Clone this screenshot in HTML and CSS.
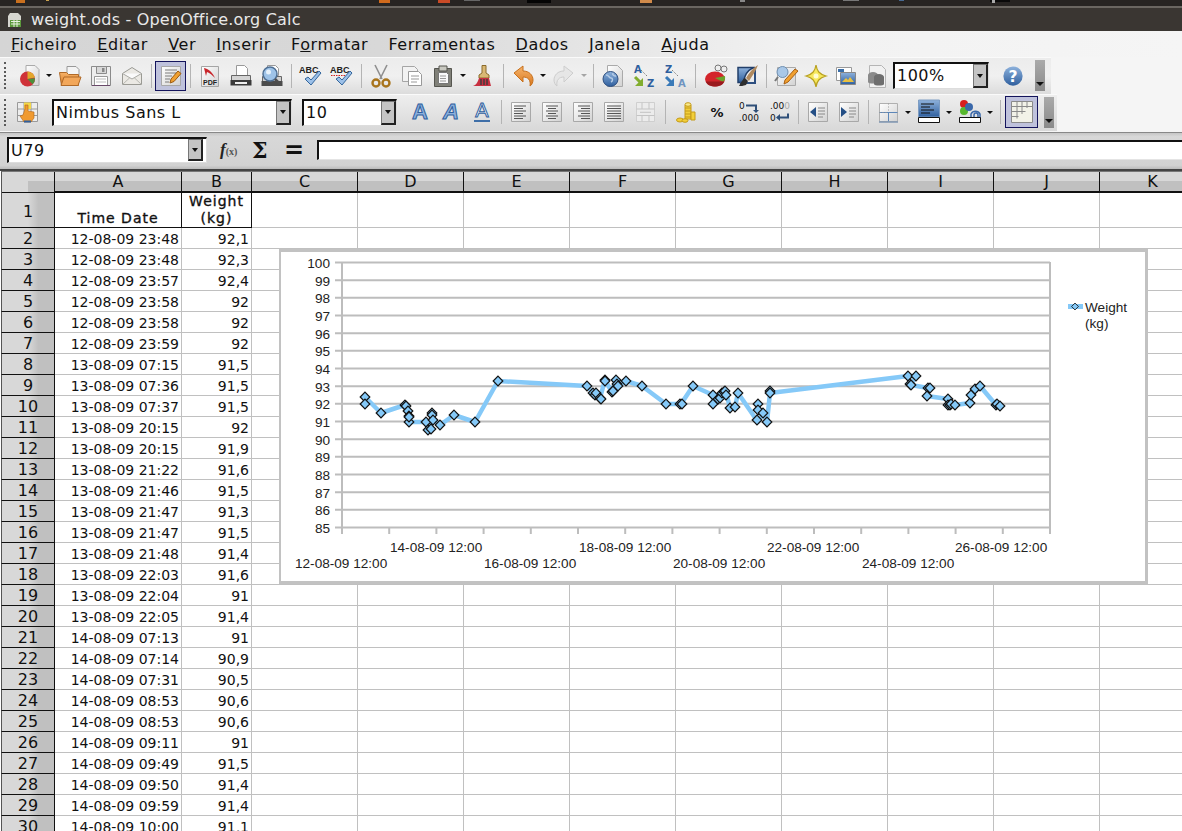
FILE: index.html
```html
<!DOCTYPE html>
<html lang="pt">
<head>
<meta charset="utf-8">
<title>weight.ods - OpenOffice.org Calc</title>
<link rel="stylesheet" href="styles.css">
</head>
<body>
<svg class="defs" width="0" height="0" aria-hidden="true">
  <defs>
    <linearGradient id="gsheet" x1="0" y1="0" x2="1" y2="1"><stop offset="0" stop-color="#fff"/><stop offset="1" stop-color="#d2d2d2"/></linearGradient>
    <linearGradient id="gorange" x1="0" y1="0" x2="0" y2="1"><stop offset="0" stop-color="#f6b36a"/><stop offset="1" stop-color="#d9781e"/></linearGradient>
    <linearGradient id="gblue" x1="0" y1="0" x2="0" y2="1"><stop offset="0" stop-color="#8eb2dc"/><stop offset="1" stop-color="#2f5f9e"/></linearGradient>
    <symbol id="page" viewBox="0 0 24 24"><path d="M2.500 2.500h19v19h-19z" fill="url(#gsheet)" stroke="#a8a8a8"/></symbol>
    <symbol id="aL" viewBox="0 0 24 24"><use href="#page"/><path d="M5 6h12M5 8.500h9M5 11h12M5 13.500h9M5 16h12M5 18.500h9" stroke="#555" fill="none"/></symbol>
    <symbol id="aC" viewBox="0 0 24 24"><use href="#page"/><path d="M6 6h12M8 8.500h8M6 11h12M8 13.500h8M6 16h12M8 18.500h8" stroke="#555" fill="none"/></symbol>
    <symbol id="aR" viewBox="0 0 24 24"><use href="#page"/><path d="M7 6h12M10 8.500h9M7 11h12M10 13.500h9M7 16h12M10 18.500h9" stroke="#555" fill="none"/></symbol>
    <symbol id="aJ" viewBox="0 0 24 24"><use href="#page"/><path d="M5 6h14M5 8.500h14M5 11h14M5 13.500h14M5 16h14M5 18.500h14" stroke="#555" fill="none"/></symbol>
    <symbol id="check" viewBox="0 0 24 24"><path d="M6 15l3-2 3 3 8-9 2 2-10 12z" fill="#9cc0e8" stroke="#33669c"/></symbol>
    <symbol id="dia" viewBox="-7 -7 14 14"><path d="M0-4.800 4.800 0 0 4.800-4.800 0z" fill="#85c9f8" stroke="#111" stroke-width="1.200"/></symbol>
  </defs>
</svg>

<svg class="strip" viewBox="0 0 1182 8" width="1182" height="8" aria-hidden="true">
  <rect width="1182" height="6" fill="#272422"/>
  <rect y="6" width="1182" height="2" fill="#6a6661"/>
  <rect x="16" width="9" height="3" fill="#c9701e"/><rect x="46" width="3" height="1" fill="#c9a24e"/>
  <rect x="379" width="11" height="3" fill="#d06a1c"/><rect x="438" width="12" height="3" fill="#c94a26"/><rect x="464" width="16" height="1" fill="#666"/>
  <rect x="527" width="24" height="3" fill="#050505"/><rect x="640" width="12" height="3" fill="#d08a4a"/><rect x="740" width="5" height="2" fill="#888"/>
  <rect x="843" width="16" height="1" fill="#777"/><rect x="899" width="5" height="1" fill="#47688f"/><rect x="990" width="20" height="2" fill="#0a0a0a"/><rect x="992" width="3" height="3" fill="#aaa"/>
</svg>

<header class="titlebar">
  <svg class="title-icon" viewBox="0 0 16 16" width="16" height="16" aria-hidden="true"><path d="M3 1h8l3 3v11H1V4z" fill="#d6d6cf"/><path d="M3 8h11v7H3z" fill="#5c9a3c"/><path d="M4 9.500h9M4 12h9M7 8v7M10 8v7" stroke="#e8f2e0" fill="none"/></svg>
  <span class="title-text">weight.ods - OpenOffice.org Calc</span>
</header>

<nav class="menubar">
  <span class="menu"><u>F</u>icheiro</span>
  <span class="menu"><u>E</u>ditar</span>
  <span class="menu"><u>V</u>er</span>
  <span class="menu"><u>I</u>nserir</span>
  <span class="menu">F<u>o</u>rmatar</span>
  <span class="menu">Ferra<u>m</u>entas</span>
  <span class="menu"><u>D</u>ados</span>
  <span class="menu"><u>J</u>anela</span>
  <span class="menu"><u>A</u>juda</span>
</nav>

<div class="toolbar tb-one">
  <span class="grip"></span>
  <span class="i"><svg viewBox="0 0 24 24"><path d="M9 1.500h9l4 4v16H9z" fill="url(#gsheet)" stroke="#aaa"/><circle cx="10.500" cy="15" r="7.500" fill="#cf3238"/><path d="M10.500 15V7.500a7.500 7.500 0 0 1 7.400 6z" fill="#e2a72c"/><path d="M10.500 15l7.500-.800a7.500 7.500 0 0 1-2.500 6z" fill="#4b8f3b"/></svg></span>
  <span class="arr"></span>
  <span class="i"><svg viewBox="0 0 24 24"><path d="M9 2.500h9l3 3V14H9z" fill="#f4f4f4" stroke="#999"/><path d="M1.500 8.500h7l2 2h10v11H3.500z" fill="url(#gorange)" stroke="#b06a28"/><path d="M3 21.500 6 13h17l-3 8.500z" fill="#f2a75a" stroke="#b06a28"/></svg></span>
  <span class="i"><svg viewBox="0 0 24 24"><path d="M2.500 2.500h19v19h-19z" fill="#ededed" stroke="#8b8b8b"/><path d="M7.500 2.500h10v7h-10z" fill="#d8d8d8" stroke="#8b8b8b"/><path d="M13 4h2.500v4H13z" fill="#888"/><path d="M5.500 12.500h13v9h-13z" fill="#fff" stroke="#999"/><path d="M7 15h10M7 18h10" stroke="#bbb"/><path d="M3 21h18v1H3z" fill="#6a4a6a"/></svg></span>
  <span class="i"><svg viewBox="0 0 24 24"><path d="M2.500 9.500 12 3.500l9.500 6v11h-19z" fill="#ebe9e4" stroke="#9a9a94"/><path d="M2.500 9.500 12 15l9.500-5.500" fill="#fafafa" stroke="#a9a9a3"/><path d="M2.500 20.500 10 13.500M21.500 20.500 14 13.500" stroke="#b8b8b2" fill="none"/></svg></span>
  <span class="sep"></span>
  <span class="i active"><svg viewBox="0 0 24 24"><use href="#page"/><path d="M6 6h12M6 9h11M6 12h7M6 15h5M6 18h4" stroke="#7c7c7c"/><path d="M11 19l1-4 7-8 3 2.500-7 8z" fill="#f0a030" stroke="#9a5a10"/></svg></span>
  <span class="sep"></span>
  <span class="i"><svg viewBox="0 0 24 24"><path d="M3.500 2.500h17v20h-17z" fill="url(#gsheet)" stroke="#a5a5a5"/><path d="M6 4c5 1 9 5 11 10-3-3-5-5-8-6l-1 4z" fill="#c8242a"/><text x="12" y="21" class="svg-pdf">PDF</text></svg></span>
  <span class="i"><svg viewBox="0 0 24 24"><path d="M7.500 1.500h8l3 3v8h-11z" fill="#fff" stroke="#999"/><path d="M2.500 11.500h19v8h-19z" fill="#d4d4d4" stroke="#666"/><path d="M1.500 16h21v5.500h-21z" fill="#3a3a3a"/><path d="M6 18h12v2H6z" fill="#eee"/></svg></span>
  <span class="i"><svg viewBox="0 0 24 24"><path d="M2.500 12.500h19v7h-19z" fill="#cfcfcf" stroke="#666"/><path d="M1.500 17h21v5h-21z" fill="#4c4c4c"/><path d="M7.500 1.500h8l3 3v7h-11z" fill="#fff" stroke="#999"/><circle cx="10" cy="10" r="7" fill="#9ec3e8" stroke="#4e6f94" stroke-width="1.500"/><circle cx="8.500" cy="8" r="2.500" fill="#e6f1fb"/><path d="M15 15l5 5" stroke="#4e4e4e" stroke-width="2.500"/></svg></span>
  <span class="sep"></span>
  <span class="i"><svg viewBox="0 0 24 24"><text x="0" y="9" class="svg-abc">ABC</text><use href="#check"/></svg></span>
  <span class="i"><svg viewBox="0 0 24 24"><text x="0" y="9" class="svg-abc">ABC</text><path d="M1 11.500h15" stroke="#d02020" stroke-dasharray="1.500 1" fill="none"/><use href="#check"/></svg></span>
  <span class="sep"></span>
  <span class="i"><svg viewBox="0 0 24 24"><path d="M6 1l7 14M18 1l-7 14" stroke="#8f8f8f" stroke-width="1.600" fill="none"/><circle cx="7" cy="19" r="3.500" fill="none" stroke="#a8741c" stroke-width="2.400"/><circle cx="17" cy="19" r="3.500" fill="none" stroke="#a8741c" stroke-width="2.400"/></svg></span>
  <span class="i"><svg viewBox="0 0 24 24"><path d="M2.500 2.500h12l3 3v12h-15z" fill="#f2f2f2" stroke="#a5a5a5"/><path d="M8.500 7.500h10l3 3v11h-13z" fill="#fff" stroke="#999"/><path d="M11 12h8M11 15h8M11 18h6" stroke="#999"/></svg></span>
  <span class="i"><svg viewBox="0 0 24 24"><path d="M3.500 4.500h17v18h-17z" fill="#808078" stroke="#55554f"/><path d="M8 2h8v5H8z" fill="#c8c8c0" stroke="#55554f"/><path d="M7.500 8.500h8l2 2v9h-10z" fill="#fafafa" stroke="#777"/><path d="M9 12h6M9 14.500h6M9 17h6" stroke="#999"/></svg></span>
  <span class="arr"></span>
  <span class="i"><svg viewBox="0 0 24 24"><path d="M10 1.500h4V9l3 2v3H7v-3l3-2z" fill="#d9b874" stroke="#8a6a2a"/><path d="M7 14h10l2 8H1c3-1 5-4 6-8z" fill="#c83040"/><path d="M9 15v6M12 15v6M15 15v6" stroke="#3c3c3c" stroke-width="1.400"/></svg></span>
  <span class="sep"></span>
  <span class="i"><svg viewBox="0 0 24 24"><path d="M3 9l9-7v5c6 0 10 4 10 9 0 2-1 5-3 6 1-6-2-9-7-9v5z" fill="url(#gorange)" stroke="#c7701c"/></svg></span>
  <span class="arr"></span>
  <span class="i"><svg viewBox="0 0 24 24"><path d="M21 9l-9-7v5c-6 0-10 4-10 9 0 2 1 5 3 6-1-6 2-9 7-9v5z" fill="#e6e6e6" stroke="#cdcdcd"/></svg></span>
  <span class="arr muted"></span>
  <span class="sep"></span>
  <span class="i"><svg viewBox="0 0 24 24"><path d="M6.500 1.500h10l5 5v16h-15z" fill="url(#gsheet)" stroke="#aaa"/><circle cx="9.500" cy="15" r="7.500" fill="url(#gblue)" stroke="#2e4f80"/><path d="M5 11c3 0 3 3 5 3s2 3 0 4M12 9c-1 2 1 3 3 3" stroke="#b4cbe6" fill="none" stroke-width="1.500"/></svg></span>
  <span class="i"><svg viewBox="0 0 24 24"><text x="2" y="9" class="svg-az">A</text><text x="15" y="23" class="svg-az">Z</text><path d="M9 6l7 7" stroke="#555" stroke-dasharray="1 1.500"/><path d="M3 13l6 6" stroke="#82ad2e" stroke-width="3"/><path d="M11 14v8H3z" fill="#82ad2e"/></svg></span>
  <span class="i"><svg viewBox="0 0 24 24"><text x="2" y="9" class="svg-az">Z</text><text x="15" y="23" class="svg-az light">A</text><path d="M9 6l7 7" stroke="#555" stroke-dasharray="1 1.500"/><path d="M3 13l6 6" stroke="#3a7ab8" stroke-width="3"/><path d="M11 14v8H3z" fill="#3a7ab8"/></svg></span>
  <span class="sep sep-wide"></span>
  <span class="i"><svg viewBox="0 0 24 24"><ellipse cx="11" cy="15" rx="10" ry="7.500" fill="#d3242a"/><path d="M11 14l10-2c.500 3-.500 5-2 6z" fill="#6aa22c"/><path d="M2 18c1 3 5 4.500 9 4.500s8-1.500 9-4.500v-.500H2z" fill="#9a1a1e"/><circle cx="14" cy="4" r="3" fill="#eee" stroke="#777"/><circle cx="20" cy="5" r="3" fill="#eee" stroke="#777"/></svg></span>
  <span class="i"><svg viewBox="0 0 24 24"><path d="M3 3.500h17c-5 1-8 4-10 9l-2 6H3z" fill="url(#gblue)" stroke="#223f6a" stroke-width="1.500"/><path d="M20 3.500V19H5" fill="none" stroke="#2e4f80" stroke-width="2"/><path d="M23 1c-5 3-9 8-12 13l3 3c3-5 7-10 9-16z" fill="#b08a60"/><path d="M4 22c2 0 4 0 7-1l2-4-3-3c-2 1-4 4-6 8z" fill="#2f2f2f"/></svg></span>
  <span class="sep"></span>
  <span class="i"><svg viewBox="0 0 24 24"><path d="M3.500 3.500h18v18h-18z" fill="url(#gsheet)" stroke="#aaa"/><circle cx="8.500" cy="8" r="5.500" fill="#a9c8e8" stroke="#6f8fb0"/><path d="M4 13l-3 4" stroke="#777" stroke-width="2"/><path d="M10 20l1-4 10-11 3 2-10 11z" fill="#f0a030" stroke="#a85f10"/></svg></span>
  <span class="i n29"><svg viewBox="0 0 24 24"><path d="M12 1c1 6 3 9 10 11-7 2-9 5-10 11-1-6-3-9-10-11 7-2 9-5 10-11z" fill="#f6e85c" stroke="#b8a020" stroke-width="1.200"/><circle cx="12" cy="12" r="2.500" fill="#fffbd0"/></svg></span>
  <span class="i"><svg viewBox="0 0 24 24"><path d="M2.500 3.500h15v13h-15z" fill="#fff" stroke="#999"/><path d="M4 5h6v3H4z" fill="#3a6ea8"/><path d="M6.500 8.500h15v12h-15z" fill="url(#gblue)" stroke="#888"/><path d="M8 18l4-4 2 2 2-3 4 5z" fill="#e8c040"/></svg></span>
  <span class="i"><svg viewBox="0 0 24 24"><path d="M4.500 1.500h12l4 4v18h-16z" fill="#f1f1f1" stroke="#b5b5b5"/><ellipse cx="8" cy="11" rx="5" ry="3" fill="#8a8a8a"/><path d="M3 11v7c0 2 10 2 10 0v-7z" fill="#8a8a8a"/><ellipse cx="14" cy="13" rx="5" ry="3" fill="#6e6e6e"/><path d="M9 13v7c0 2 10 2 10 0v-7z" fill="#6e6e6e"/></svg></span>
  <span class="combo zoom-box"><span class="combo-text">100%</span><span class="drop"></span></span>
  <span class="i help"><svg viewBox="0 0 24 24"><circle cx="12" cy="12" r="10.500" fill="url(#gblue)"/><text x="12" y="18" class="svg-help">?</text></svg></span>
  <span class="endgrip"></span>
</div>

<div class="toolbar tb-two">
  <span class="grip"></span>
  <span class="i"><svg viewBox="0 0 24 24"><path d="M2.500 2.500h20v19h-20z" fill="#ededed" stroke="#9a9a9a"/><path d="M2.500 9h20M2.500 15.500h20M9 2.500v19M16 2.500v19" stroke="#9a9a9a"/><path d="M9 2.500h7V9H9z" fill="#f4d848"/><path d="M10 9V5h3v6l6 1v6l-3 4H9l-4-6 3-1z" fill="#f09a30" stroke="#b0641a" stroke-width=".6"/><path d="M9 21.500h7" stroke="#2f5f9e" stroke-width="2"/></svg></span>
  <span class="combo font-box"><span class="combo-text">Nimbus Sans L</span><span class="drop"></span></span>
  <span class="combo size-box"><span class="combo-text">10</span><span class="drop"></span></span>
  <span class="i first-a"><svg viewBox="0 0 24 24"><text x="12" y="19" class="svg-a bold">A</text></svg></span>
  <span class="i"><svg viewBox="0 0 24 24"><text x="12" y="19" class="svg-a ital">A</text></svg></span>
  <span class="i"><svg viewBox="0 0 24 24"><text x="12" y="17" class="svg-a plain">A</text><path d="M4 21h16" stroke="#3f6fa8" stroke-width="2"/></svg></span>
  <span class="sep"></span>
  <span class="i"><svg viewBox="0 0 24 24"><use href="#aL"/></svg></span>
  <span class="i"><svg viewBox="0 0 24 24"><use href="#aC"/></svg></span>
  <span class="i"><svg viewBox="0 0 24 24"><use href="#aR"/></svg></span>
  <span class="i"><svg viewBox="0 0 24 24"><use href="#aJ"/></svg></span>
  <span class="i"><svg viewBox="0 0 24 24"><path d="M3.500 2.500h18v19h-18z" fill="#ececec" stroke="#cfcfcf"/><path d="M3.500 9h18M3.500 15.500h18M9 2.500V9M16 2.500V9M9 15.500v6M16 15.500v6M7 12.300h11" stroke="#c4c4c4" fill="none"/></svg></span>
  <span class="sep sep-wide"></span>
  <span class="i"><svg viewBox="0 0 24 24"><path d="M11 5h6v14h-6z" fill="#f2cf3a" stroke="#c49a1a"/><path d="M11 8h6M11 11h6M11 14h6M11 17h6" stroke="#c49a1a"/><ellipse cx="14" cy="4.500" rx="3" ry="1.800" fill="#fae98a" stroke="#c49a1a"/><path d="M17 12h4v8h-4z" fill="#f2cf3a" stroke="#c49a1a"/><ellipse cx="6" cy="20" rx="3.500" ry="2" fill="#f2cf3a" stroke="#c49a1a"/><ellipse cx="11" cy="20.500" rx="3" ry="1.800" fill="#f2cf3a" stroke="#c49a1a"/></svg></span>
  <span class="i"><svg viewBox="0 0 24 24"><text x="12" y="17" class="svg-pct">%</text></svg></span>
  <span class="i"><svg viewBox="0 0 24 24"><text x="3" y="9" class="svg-num">0</text><path d="M10 5.500h10v5" fill="none" stroke="#2f4f78" stroke-width="2"/><path d="M17 10h6l-3 3z" fill="#2f4f78"/><text x="3" y="21" class="svg-num">.000</text></svg></span>
  <span class="i"><svg viewBox="0 0 24 24"><text x="3" y="9" class="svg-num">.00<tspan class="svg-fade">0</tspan></text><text x="3" y="21" class="svg-num">0</text><path d="M21 13.500v4H12" fill="none" stroke="#2f4f78" stroke-width="2"/><path d="M13 14v7l-4-3.500z" fill="#2f4f78"/></svg></span>
  <span class="sep"></span>
  <span class="i"><svg viewBox="0 0 24 24"><use href="#page"/><path d="M10 7v10l-6-5z" fill="#244f86"/><path d="M12 8h7M12 11h7M12 14h7M12 17h5" stroke="#888"/></svg></span>
  <span class="i"><svg viewBox="0 0 24 24"><use href="#page"/><path d="M4 7v10l6-5z" fill="#244f86"/><path d="M12 8h7M12 11h7M12 14h7M12 17h5" stroke="#888"/></svg></span>
  <span class="sep"></span>
  <span class="i"><svg viewBox="0 0 24 24"><path d="M3.500 3.500h18v18h-18z" fill="url(#gsheet)" stroke="#b0b0b0"/><path d="M3.500 12.500h18M12.500 12v9.500" stroke="#5c86b8"/><path d="M12.500 3.500V12M3.500 12.500H12" stroke="#999" stroke-dasharray="1 2"/><path d="M3 22h19" stroke="#7f96b2" stroke-width="1.500"/></svg></span>
  <span class="arr"></span>
  <span class="i"><svg viewBox="0 0 24 24"><path d="M1.500 0h21v17h-21z" fill="url(#gblue)" stroke="#7d9cc2"/><path d="M4 4h13M4 7h9M4 10h13M4 13h9" stroke="#111"/><path d="M1.500 17.500h21v5h-21z" fill="#fff" stroke="#111"/></svg></span>
  <span class="arr"></span>
  <span class="i"><svg viewBox="0 0 24 24"><circle cx="6" cy="4" r="4" fill="#d81e1e"/><circle cx="6" cy="11" r="4" fill="#58b82e"/><circle cx="11" cy="7" r="4" fill="#3a68aa"/><path d="M13 17v-3a5 5 0 0 1 9 0v4M16 17v-2a2 2 0 0 1 4 0v2" fill="none" stroke="#3a68aa" stroke-width="1.500"/><path d="M1.500 17.500h21v5h-21z" fill="#fff" stroke="#111"/></svg></span>
  <span class="arr"></span>
  <span class="sep sep-wide"></span>
  <span class="i active tall"><svg viewBox="0 0 24 24"><path d="M1.500 1.500h21v21h-21z" fill="#f2f2e8" stroke="#8a8a8a"/><path d="M1.500 6.500h21M1.500 11.500h14M1.500 16.500h7M7 1.500v17M12 1.500V14M17 1.500V8" stroke="#8a8a8a" stroke-width="1" fill="none"/></svg></span>
  <span class="endgrip two"></span>
</div>

<div class="formulabar">
  <span class="name-box"><span class="combo-text">U79</span><span class="drop"></span></span>
  <span class="fx"><i>f</i><small>(x)</small></span>
  <span class="sigma">Σ</span>
  <span class="equals">=</span>
  <span class="input"></span>
</div>

<main class="sheet">
  <div class="row head">
    <span class="corner"></span><span class="ch a">A</span><span class="ch b">B</span>
    <span class="ch w">C</span><span class="ch w">D</span><span class="ch w">E</span><span class="ch w">F</span><span class="ch w">G</span><span class="ch w">H</span><span class="ch w">I</span><span class="ch w">J</span><span class="ch w">K</span>
  </div>
  <div class="row first"><span class="rh">1</span><span class="c a hd bottom">Time Date</span><span class="c b hd">Weight (kg)</span><span class="rest"></span></div>
  <div class="row"><span class="rh">2</span><span class="c a">12-08-09 23:48</span><span class="c b">92,1</span><span class="rest"></span></div>
  <div class="row"><span class="rh">3</span><span class="c a">12-08-09 23:48</span><span class="c b">92,3</span><span class="rest"></span></div>
  <div class="row"><span class="rh">4</span><span class="c a">12-08-09 23:57</span><span class="c b">92,4</span><span class="rest"></span></div>
  <div class="row"><span class="rh">5</span><span class="c a">12-08-09 23:58</span><span class="c b">92</span><span class="rest"></span></div>
  <div class="row"><span class="rh">6</span><span class="c a">12-08-09 23:58</span><span class="c b">92</span><span class="rest"></span></div>
  <div class="row"><span class="rh">7</span><span class="c a">12-08-09 23:59</span><span class="c b">92</span><span class="rest"></span></div>
  <div class="row"><span class="rh">8</span><span class="c a">13-08-09 07:15</span><span class="c b">91,5</span><span class="rest"></span></div>
  <div class="row"><span class="rh">9</span><span class="c a">13-08-09 07:36</span><span class="c b">91,5</span><span class="rest"></span></div>
  <div class="row"><span class="rh">10</span><span class="c a">13-08-09 07:37</span><span class="c b">91,5</span><span class="rest"></span></div>
  <div class="row"><span class="rh">11</span><span class="c a">13-08-09 20:15</span><span class="c b">92</span><span class="rest"></span></div>
  <div class="row"><span class="rh">12</span><span class="c a">13-08-09 20:15</span><span class="c b">91,9</span><span class="rest"></span></div>
  <div class="row"><span class="rh">13</span><span class="c a">13-08-09 21:22</span><span class="c b">91,6</span><span class="rest"></span></div>
  <div class="row"><span class="rh">14</span><span class="c a">13-08-09 21:46</span><span class="c b">91,5</span><span class="rest"></span></div>
  <div class="row"><span class="rh">15</span><span class="c a">13-08-09 21:47</span><span class="c b">91,3</span><span class="rest"></span></div>
  <div class="row"><span class="rh">16</span><span class="c a">13-08-09 21:47</span><span class="c b">91,5</span><span class="rest"></span></div>
  <div class="row"><span class="rh">17</span><span class="c a">13-08-09 21:48</span><span class="c b">91,4</span><span class="rest"></span></div>
  <div class="row"><span class="rh">18</span><span class="c a">13-08-09 22:03</span><span class="c b">91,6</span><span class="rest"></span></div>
  <div class="row"><span class="rh">19</span><span class="c a">13-08-09 22:04</span><span class="c b">91</span><span class="rest"></span></div>
  <div class="row"><span class="rh">20</span><span class="c a">13-08-09 22:05</span><span class="c b">91,4</span><span class="rest"></span></div>
  <div class="row"><span class="rh">21</span><span class="c a">14-08-09 07:13</span><span class="c b">91</span><span class="rest"></span></div>
  <div class="row"><span class="rh">22</span><span class="c a">14-08-09 07:14</span><span class="c b">90,9</span><span class="rest"></span></div>
  <div class="row"><span class="rh">23</span><span class="c a">14-08-09 07:31</span><span class="c b">90,5</span><span class="rest"></span></div>
  <div class="row"><span class="rh">24</span><span class="c a">14-08-09 08:53</span><span class="c b">90,6</span><span class="rest"></span></div>
  <div class="row"><span class="rh">25</span><span class="c a">14-08-09 08:53</span><span class="c b">90,6</span><span class="rest"></span></div>
  <div class="row"><span class="rh">26</span><span class="c a">14-08-09 09:11</span><span class="c b">91</span><span class="rest"></span></div>
  <div class="row"><span class="rh">27</span><span class="c a">14-08-09 09:49</span><span class="c b">91,5</span><span class="rest"></span></div>
  <div class="row"><span class="rh">28</span><span class="c a">14-08-09 09:50</span><span class="c b">91,4</span><span class="rest"></span></div>
  <div class="row"><span class="rh">29</span><span class="c a">14-08-09 09:59</span><span class="c b">91,4</span><span class="rest"></span></div>
  <div class="row"><span class="rh">30</span><span class="c a">14-08-09 10:00</span><span class="c b">91,1</span><span class="rest"></span></div>

  <svg class="chart" viewBox="279 249 869 335" width="869" height="335" role="img" aria-label="Weight chart">
    <rect x="279" y="249" width="869" height="335" fill="#c2c2c2"/>
    <rect x="281" y="252" width="864" height="329" fill="#fff"/>
    <path class="g" d="M335 262.500H1050M335 280.200H1050M335 297.800H1050M335 315.500H1050M335 333.200H1050M335 350.800H1050M335 368.500H1050M335 386.200H1050M335 403.800H1050M335 421.500H1050M335 439.200H1050M335 456.800H1050M335 474.500H1050M335 492.200H1050M335 509.800H1050M335 527.500H1050"/>
    <path class="g" d="M342 262V534M1050 262V534M389.200 528v6M436.400 528v6M483.600 528v6M530.800 528v6M578 528v6M625.200 528v6M672.400 528v6M719.600 528v6M766.800 528v6M814 528v6M861.200 528v6M908.400 528v6M955.600 528v6M1002.800 528v6"/>
    <g class="ylab">
      <text x="330" y="267.500">100</text><text x="330" y="285.500">99</text><text x="330" y="302.500">98</text><text x="330" y="320.500">97</text><text x="330" y="338.500">96</text><text x="330" y="355.500">95</text><text x="330" y="373.500">94</text><text x="330" y="391.500">93</text><text x="330" y="408.500">92</text><text x="330" y="426.500">91</text><text x="330" y="444.500">90</text><text x="330" y="461.500">89</text><text x="330" y="479.500">88</text><text x="330" y="497.500">87</text><text x="330" y="514.500">86</text><text x="330" y="532.500">85</text>
    </g>
    <g class="xlab">
      <text x="390" y="552">14-08-09 12:00</text><text x="579" y="552">18-08-09 12:00</text><text x="767" y="552">22-08-09 12:00</text><text x="955" y="552">26-08-09 12:00</text>
      <text x="295" y="568">12-08-09 12:00</text><text x="484" y="568">16-08-09 12:00</text><text x="673" y="568">20-08-09 12:00</text><text x="862" y="568">24-08-09 12:00</text>
    </g>
    <polyline class="series" points="365,404 365,397 381,413 405,405 406,406 408,411 409,416 409,422 426,422 428,430 431,429 432,413 433,420 440,425 454,415 475,422 498,381 587,386 593,393 596,395 600,398 605,380 612,392 616,380 618,386 626,381 642,386 666,404 681,404 693,386 713,395 713,404 718,399 722,393 726,392 730,408 735,407 738,393 758,422 763,413 767,422 770,393 908,376 916,376 911,385 928,388 927,396 948,399 951,404 955,405 970,403 971,395 975,389 980,386 996,405 1000,406"/>
    <g class="marks">
      <use href="#dia" x="358" y="390" width="14" height="14"/><use href="#dia" x="358" y="397" width="14" height="14"/><use href="#dia" x="374" y="406" width="14" height="14"/><use href="#dia" x="398" y="398" width="14" height="14"/><use href="#dia" x="399" y="399" width="14" height="14"/><use href="#dia" x="401" y="404" width="14" height="14"/><use href="#dia" x="402" y="409" width="14" height="14"/><use href="#dia" x="402" y="415" width="14" height="14"/><use href="#dia" x="402" y="410" width="14" height="14"/>
      <use href="#dia" x="419" y="415" width="14" height="14"/><use href="#dia" x="421" y="423" width="14" height="14"/><use href="#dia" x="424" y="422" width="14" height="14"/><use href="#dia" x="425" y="406" width="14" height="14"/><use href="#dia" x="425" y="408" width="14" height="14"/><use href="#dia" x="426" y="413" width="14" height="14"/><use href="#dia" x="433" y="418" width="14" height="14"/><use href="#dia" x="447" y="408" width="14" height="14"/><use href="#dia" x="468" y="415" width="14" height="14"/><use href="#dia" x="491" y="374" width="14" height="14"/>
      <use href="#dia" x="580" y="379" width="14" height="14"/><use href="#dia" x="586" y="386" width="14" height="14"/><use href="#dia" x="588" y="388" width="14" height="14"/><use href="#dia" x="589" y="386" width="14" height="14"/><use href="#dia" x="593" y="391" width="14" height="14"/><use href="#dia" x="594" y="392" width="14" height="14"/><use href="#dia" x="598" y="373" width="14" height="14"/><use href="#dia" x="598" y="374" width="14" height="14"/><use href="#dia" x="605" y="385" width="14" height="14"/><use href="#dia" x="606" y="384" width="14" height="14"/><use href="#dia" x="609" y="373" width="14" height="14"/><use href="#dia" x="610" y="377" width="14" height="14"/><use href="#dia" x="611" y="379" width="14" height="14"/><use href="#dia" x="619" y="374" width="14" height="14"/><use href="#dia" x="635" y="379" width="14" height="14"/><use href="#dia" x="659" y="397" width="14" height="14"/>
      <use href="#dia" x="673" y="397" width="14" height="14"/><use href="#dia" x="675" y="397" width="14" height="14"/><use href="#dia" x="686" y="379" width="14" height="14"/><use href="#dia" x="706" y="388" width="14" height="14"/><use href="#dia" x="706" y="397" width="14" height="14"/><use href="#dia" x="711" y="392" width="14" height="14"/><use href="#dia" x="713" y="391" width="14" height="14"/><use href="#dia" x="715" y="386" width="14" height="14"/><use href="#dia" x="717" y="385" width="14" height="14"/><use href="#dia" x="718" y="384" width="14" height="14"/><use href="#dia" x="719" y="388" width="14" height="14"/><use href="#dia" x="723" y="401" width="14" height="14"/><use href="#dia" x="728" y="400" width="14" height="14"/><use href="#dia" x="731" y="386" width="14" height="14"/>
      <use href="#dia" x="751" y="397" width="14" height="14"/><use href="#dia" x="751" y="403" width="14" height="14"/><use href="#dia" x="750" y="413" width="14" height="14"/><use href="#dia" x="756" y="406" width="14" height="14"/><use href="#dia" x="760" y="415" width="14" height="14"/><use href="#dia" x="763" y="384" width="14" height="14"/><use href="#dia" x="763" y="386" width="14" height="14"/>
      <use href="#dia" x="901" y="369" width="14" height="14"/><use href="#dia" x="909" y="369" width="14" height="14"/><use href="#dia" x="903" y="377" width="14" height="14"/><use href="#dia" x="904" y="378" width="14" height="14"/><use href="#dia" x="921" y="381" width="14" height="14"/><use href="#dia" x="923" y="381" width="14" height="14"/><use href="#dia" x="920" y="389" width="14" height="14"/><use href="#dia" x="941" y="392" width="14" height="14"/><use href="#dia" x="941" y="398" width="14" height="14"/><use href="#dia" x="943" y="398" width="14" height="14"/><use href="#dia" x="944" y="397" width="14" height="14"/><use href="#dia" x="948" y="398" width="14" height="14"/><use href="#dia" x="963" y="396" width="14" height="14"/><use href="#dia" x="964" y="388" width="14" height="14"/><use href="#dia" x="968" y="382" width="14" height="14"/><use href="#dia" x="973" y="379" width="14" height="14"/><use href="#dia" x="989" y="398" width="14" height="14"/><use href="#dia" x="990" y="397" width="14" height="14"/><use href="#dia" x="993" y="399" width="14" height="14"/>
    </g>
    <path class="legend-line" d="M1068 306.500h15"/>
    <use href="#dia" x="1070" y="301.500" width="10" height="10"/>
    <text class="leg" x="1085" y="312">Weight</text>
    <text class="leg" x="1085" y="328">(kg)</text>
  </svg>
</main>
</body>
</html>
```

FILE: styles.css
```css
* { box-sizing: border-box; }
html, body { margin: 0; height: 831px; overflow: hidden; }
body { width: 1182px; background: #f5f5f5; font-family: "DejaVu Sans", sans-serif; color: #111; display: flex; flex-direction: column; }
.defs { position: absolute; }
.strip { display: block; flex: none; }

.titlebar { flex: none; height: 23px; background: #3a3632; display: flex; align-items: center; padding-left: 7px; gap: 8px; color: #e8e8e8; font-size: 16px; letter-spacing: .19px; }
.title-icon { flex: none; }
.title-text { white-space: nowrap; }

.menubar { flex: none; height: 26px; display: flex; align-items: center; padding-left: 11px; gap: 20.300px; font-size: 16px; letter-spacing: .54px; background: linear-gradient(90deg, #d5d5d5 0, #d8d8d8 380px, #f2f2f2 800px, #f5f5f5 100%); }
.menu { white-space: nowrap; }

.toolbar { flex: none; display: flex; align-items: center; }
.tb-one { width: 1051px; height: 37px; padding-bottom: 1px; background: linear-gradient(#ececec, #f0f0f0 50%, #dcdcdc); border-top: 1px solid #fafafa; }
.tb-two { width: 1057px; height: 37px; padding-bottom: 2px; background: linear-gradient(#eeeeee, #d8d8d8); border-top: 1px solid #fafafa; }

.grip { flex: none; width: 13px; align-self: center; height: 27px; margin: 0; border-left: 2px dotted #5a5a5a; position: relative; left: 4px; }
.tb-two .grip { width: 11px; }

.i { flex: none; width: 31px; height: 30px; display: flex; align-items: center; justify-content: center; }
.i svg { width: 24px; height: 24px; overflow: visible; }
.i.n29 { width: 29px; }
.i.active { background: #bfc2dc; border: 1px solid #14145c; }
.i.tall { width: 33px; height: 32px; }
.i.first-a { margin-left: 7px; }
.i.help { margin-left: 8px; }
.i.help svg { width: 22px; height: 22px; }

.arr { flex: none; width: 10px; height: 10px; display: flex; align-items: center; justify-content: center; }
.arr::after { content: ""; border: 3px solid transparent; border-top: 3.500px solid #111; border-bottom: 0; }
.arr.muted::after { border-top-color: #a5a5a5; }

.sep { flex: none; width: 8px; height: 24px; display: flex; justify-content: center; }
.sep::after { content: ""; width: 1px; background: #b4b4b4; }
.sep-wide { width: 10px; }

.endgrip { flex: none; width: 10px; height: 31px; margin-left: 7px; background: linear-gradient(#aaa, #8a8a8a); display: flex; align-items: flex-end; justify-content: center; padding-bottom: 5px; }
.endgrip.two { margin-left: 6px; }
.endgrip::after { content: ""; border: 4px solid transparent; border-top: 4px solid #111; border-bottom: 0; }

.combo, .name-box { flex: none; background: #fff; border-style: solid; border-width: 2px 1px 1px 2px; border-color: #111 #ddd #ddd #111; display: flex; align-items: stretch; justify-content: space-between; font-size: 16px; letter-spacing: .5px; height: 27px; }
.combo-text { padding-left: 2px; line-height: 23px; white-space: nowrap; }
.drop { flex: none; width: 15px; background: #c4c4c4; border: 1px solid #777; border-right: 2px solid #222; border-bottom: 2px solid #222; display: flex; align-items: center; justify-content: center; }
.drop::after { content: ""; border: 3px solid transparent; border-top: 4px solid #111; border-bottom: 0; }
.zoom-box { width: 96px; margin-left: 1px; }
.font-box { width: 240px; margin-left: 10px; }
.size-box { width: 95px; margin-left: 10px; }

.formulabar { flex: none; height: 39px; margin-top: 1px; padding-bottom: 2px; border-top: 1px solid #888; border-bottom: 2px solid #444; background: linear-gradient(#c6c6c6, #d8d8d8 10%, #d2d2d2 90%, #bbb); display: flex; align-items: center; padding-left: 7px; }
.name-box { width: 200px; height: 26px; }
.name-box .drop { width: 15px; margin-right: 3px; margin-bottom: 1px; }
.fx { width: 22px; margin-left: 13px; font-family: "Liberation Serif", serif; font-size: 17px; font-weight: bold; color: #222; }
.fx small { font-size: 10px; color: #555; }
.sigma { width: 16px; margin-left: 10px; font-size: 22px; font-weight: bold; font-family: "DejaVu Serif", serif; line-height: 1; }
.equals { width: 16px; margin-left: 16px; font-size: 24px; font-weight: bold; line-height: 1; }
.input { flex: 1; margin-left: 17px; height: 20px; background: #fff; border-style: solid; border-width: 2px 0 1px 2px; border-color: #111 #ddd #e4e4e4 #111; }

.sheet { flex: 1; position: relative; background: #fff; overflow: hidden; padding-left: 1px; font-size: 14px; }
.row { display: flex; height: 21px; }
.row.first { height: 35px; }
.row.head { height: 22px; border-top: 1px solid #777; border-left: 1px solid #555; }

.corner { flex: none; width: 53px; background: linear-gradient(#d8d8d8 45%, transparent 45%), linear-gradient(90deg, #d8d8d8 50%, #c0c0c0 50%); border-right: 1px solid #111; border-bottom: 1px solid #111; }
.ch { flex: none; text-align: center; font-size: 16px; line-height: 20px; background: linear-gradient(#d8d8d8 45%, #c0c0c0 45%); border-right: 1px solid #111; border-bottom: 2px solid #111; }
.ch.a { width: 127px; }
.ch.b { width: 70px; }
.ch.w { width: 106px; }

.rh { flex: none; width: 54px; text-align: center; font-size: 16px; line-height: 22px; background: linear-gradient(90deg, #d8d8d8 50%, #c0c0c0 70%); border-left: 1px solid #555; border-right: 1px solid #111; border-bottom: 1px solid #111; }
.first .rh { line-height: 37px; }

.c { flex: none; text-align: right; padding-right: 2px; line-height: 22px; white-space: nowrap; border-right: 1px solid #c0c0c0; border-bottom: 1px solid #c0c0c0; }
.c.a { width: 127px; }
.c.b { width: 70px; }
.c.hd { border-right: 1px solid #111; border-bottom: 1px solid #111; text-align: center; letter-spacing: 1px; white-space: normal; line-height: 17px; padding: 0; -webkit-text-stroke: .35px #111; }
.c.bottom { padding-top: 17px; }
.rest { flex: 1; border-bottom: 1px solid #c0c0c0; background: repeating-linear-gradient(90deg, #fff 0 105px, #c0c0c0 105px 106px); }

.chart { position: absolute; left: 279px; top: 78px; display: block; }
.chart text { font-family: "Liberation Sans", Arial, sans-serif; font-size: 13.600px; fill: #222; }
.g { stroke: #bdbdbd; stroke-width: 2; fill: none; }
.ylab text { text-anchor: end; }
.series { fill: none; stroke: #85c9f8; stroke-width: 4.500; stroke-linejoin: round; }
.legend-line { stroke: #85c9f8; stroke-width: 5; fill: none; }

.svg-pdf { font-family: "Liberation Sans", sans-serif; font-size: 7px; font-weight: bold; text-anchor: middle; fill: #222; }
.svg-abc { font-family: "Liberation Sans", sans-serif; font-size: 9px; font-weight: bold; fill: #222; }
.svg-az { font-family: "DejaVu Sans", sans-serif; font-size: 10px; font-weight: bold; fill: #2f5f9e; }
.svg-az.light { fill: #6f94c0; }
.svg-help { font-family: "DejaVu Sans", sans-serif; font-size: 17px; font-weight: bold; text-anchor: middle; fill: #fff; }
.svg-a { font-family: "Liberation Sans", sans-serif; font-size: 22px; text-anchor: middle; fill: #8cb0dc; stroke: #2f5f9e; stroke-width: 1; }
.svg-a.bold { font-weight: bold; }
.svg-a.ital { font-style: italic; font-weight: bold; }
.svg-a.plain { fill: #fff; font-size: 20px; }
.svg-pct { font-family: "DejaVu Sans", sans-serif; font-size: 13px; font-weight: bold; text-anchor: middle; fill: #111; }
.svg-num { font-family: "DejaVu Sans", sans-serif; font-size: 9px; fill: #111; }
.svg-fade { fill: #aaa; }
```
